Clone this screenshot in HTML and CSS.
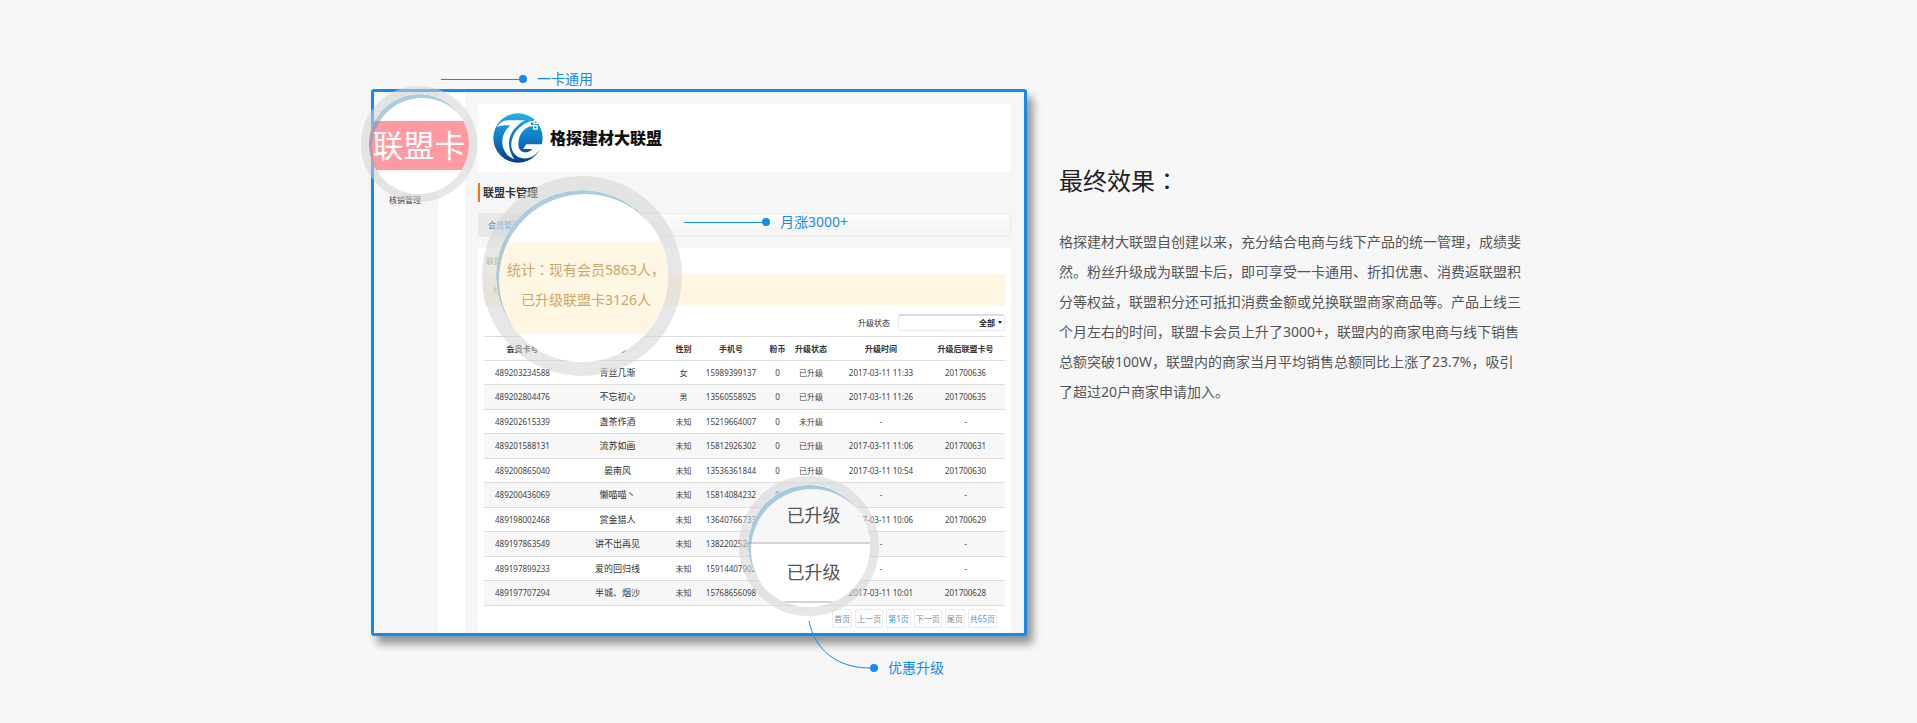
FILE: index.html
```html
<!DOCTYPE html>
<html lang="zh-CN">
<head>
<meta charset="utf-8">
<title>最终效果</title>
<link rel="stylesheet" href="styles.css">
</head>
<body>
<section class="showcase">
  <div class="figure">
    <div class="screen">
      <nav class="sidebar"><a href="#">核销管理</a></nav>
      <div class="subnav"></div>
      <div class="main">
        <header class="brand">
          <svg class="brand-logo" viewBox="0 0 150 150" aria-hidden="true">
            <defs>
              <linearGradient id="logo-fill" x1="0" y1="0" x2="0" y2="1">
                <stop offset="0" stop-color="#27b0e6"/>
                <stop offset="0.5" stop-color="#0e7cc6"/>
                <stop offset="1" stop-color="#043a92"/>
              </linearGradient>
            </defs>
            <circle cx="75" cy="75" r="74" fill="url(#logo-fill)"/>
            <path fill="#fff" d="M12 42Q24 22 44 22H96Q80 30 72 40C46 62 38 102 64 139C36 128 22 98 30 70Q36 50 52 38Q28 34 12 42Z"/>
            <path fill="#fff" d="M114 24C72 38 50 74 56 106C62 138 104 146 128 124Q142 112 150 94H100L90 108H118C104 124 76 122 76 94C76 66 92 46 112 40Z"/>
            <g fill="#0e86cc" stroke="#fff" stroke-width="4">
              <rect x="112" y="27" width="11" height="11"/>
              <rect x="124" y="23" width="8" height="8"/>
              <rect x="122" y="38" width="10" height="10"/>
            </g>
          </svg>
          <span class="brand-name">格探建材大联盟</span>
        </header>
        <h2 class="page-title">联盟卡管理</h2>
        <div class="tabs"><a class="tab" href="#">会员管理</a></div>
        <div class="panel">
          <div class="crumb">联盟卡会员</div>
          <div class="notice">统计：现有会员5863人，已升级联盟卡3126人、</div>
          <div class="filter">
            <label for="state">升级状态</label>
            <span class="select-wrap"><select id="state"><option>全部</option></select></span>
          </div>
          <table class="members">
            <colgroup><col class="c-card"><col class="c-name"><col class="c-sex"><col class="c-phone"><col class="c-coin"><col class="c-state"><col class="c-time"><col class="c-union"></colgroup>
            <thead><tr><th>会员卡号</th><th>昵称</th><th>性别</th><th>手机号</th><th>粉币</th><th>升级状态</th><th>升级时间</th><th>升级后联盟卡号</th></tr></thead>
            <tbody>
              <tr><td>489203234588</td><td>青丝几渐</td><td>女</td><td>15989399137</td><td>0</td><td>已升级</td><td>2017-03-11 11:33</td><td>201700636</td></tr>
              <tr><td>489202804476</td><td>不忘初心</td><td>男</td><td>13560558925</td><td>0</td><td>已升级</td><td>2017-03-11 11:26</td><td>201700635</td></tr>
              <tr><td>489202615339</td><td>盏茶作酒</td><td>未知</td><td>15219664007</td><td>0</td><td>未升级</td><td>-</td><td>-</td></tr>
              <tr><td>489201588131</td><td>流苏如画</td><td>未知</td><td>15812926302</td><td>0</td><td>已升级</td><td>2017-03-11 11:06</td><td>201700631</td></tr>
              <tr><td>489200865040</td><td>晏南风</td><td>未知</td><td>13536361844</td><td>0</td><td>已升级</td><td>2017-03-11 10:54</td><td>201700630</td></tr>
              <tr><td>489200436069</td><td>懒喵喵丶</td><td>未知</td><td>15814084232</td><td>0</td><td>未升级</td><td>-</td><td>-</td></tr>
              <tr><td>489198002468</td><td>赏金猎人</td><td>未知</td><td>13640766733</td><td>0</td><td>已升级</td><td>2017-03-11 10:06</td><td>201700629</td></tr>
              <tr><td>489197863549</td><td>讲不出再见</td><td>未知</td><td>13822025267</td><td>0</td><td>未升级</td><td>-</td><td>-</td></tr>
              <tr><td>489197899233</td><td>爱的回归线</td><td>未知</td><td>15914407902</td><td>0</td><td>未升级</td><td>-</td><td>-</td></tr>
              <tr><td>489197707294</td><td>半城、烟沙</td><td>未知</td><td>15768656098</td><td>0</td><td>已升级</td><td>2017-03-11 10:01</td><td>201700628</td></tr>
            </tbody>
          </table>
          <nav class="pager">
            <a href="#">首页</a><a href="#">上一页</a><a class="current" href="#">第1页</a><a href="#">下一页</a><a href="#">尾页</a><a class="current" href="#">共65页</a>
          </nav>
        </div>
      </div>
    </div>

    <div class="lens lens-card">
      <div class="lens-view"><span class="card-band">联盟卡</span></div>
    </div>
    <div class="lens lens-stats">
      <div class="lens-view"><p class="stats-band">统计<span class="colon" lang="zh-TW">：</span>现有会员5863人，<br>已升级联盟卡3126人</p></div>
    </div>
    <div class="lens lens-state">
      <div class="lens-view"><span class="state-row">已升级</span><span class="state-row">已升级</span></div>
    </div>

    <div class="callout callout-card"><span class="lead"></span>一卡通用</div>
    <div class="callout callout-growth"><span class="lead"></span>月涨3000+</div>
    <div class="callout callout-upgrade">
      <svg class="curve" viewBox="0 0 70 52" aria-hidden="true">
        <path d="M1 0C7 30 30 47 62 47" fill="none" stroke="#128bf1"/>
        <circle cx="66" cy="47" r="4" fill="#128bf1"/>
      </svg>
      优惠升级
    </div>
  </div>

  <article class="summary">
    <h1>最终效果<span class="colon" lang="zh-TW">：</span></h1>
    <p>格探建材大联盟自创建以来，充分结合电商与线下产品的统一管理，成绩斐然。粉丝升级成为联盟卡后，即可享受一卡通用、折扣优惠、消费返联盟积分等权益，联盟积分还可抵扣消费金额或兑换联盟商家商品等。产品上线三个月左右的时间，联盟卡会员上升了3000+，联盟内的商家电商与线下销售总额突破100W，联盟内的商家当月平均销售总额同比上涨了23.7%，吸引了超过20户商家申请加入。</p>
  </article>
</section>
</body>
</html>
```

FILE: styles.css
```css
* { box-sizing: border-box; }

body {
  margin: 0;
  background: #f7f7f7;
  color: #444;
  font-family: "Noto Sans", "Noto Sans CJK SC", sans-serif;
  font-size: 14px;
}

a { color: inherit; text-decoration: none; }

/* Colon centred in its cell */
.colon { font-family: "Noto Sans CJK TC", sans-serif; line-height: 1; }

.showcase {
  display: flex;
  align-items: flex-start;
  gap: 32px;
  max-width: 1175px;
  margin: 0 auto;
  padding: 89px 0 87px;
}

.figure { position: relative; flex: 0 0 656px; }

/* Framed admin screen */
.screen {
  display: flex;
  border: 3px solid #128bf1;
  border-radius: 3px;
  background: #f6f6f6;
  box-shadow: 6px 8px 8px rgba(0, 0, 0, 0.4);
  font-size: 8px;
  line-height: 12px;
}

.sidebar { flex: 0 0 64px; padding: 102px 0 0 15px; color: #333; }
.subnav { flex: 0 0 27px; background: #fff; }
.main { flex: 1; min-width: 0; padding: 12px 13px 0; }

.brand {
  display: flex;
  align-items: center;
  gap: 7px;
  height: 68px;
  padding-left: 15px;
  background: #fff;
}
.brand-logo { width: 50px; height: 50px; }
.brand-name { color: #111; font-size: 16px; line-height: 24px; font-weight: 900; }

.page-title {
  margin: 11px 0;
  padding-left: 3px;
  border-left: 2px solid #ff6c0a;
  color: #333;
  font-size: 11px;
  line-height: 19px;
  font-weight: 700;
}

.tabs {
  display: flex;
  height: 24px;
  border: 1px solid #ebebeb;
  border-radius: 2px;
  background: linear-gradient(#fcfcfe, #f4f4f4);
}
.tab { padding: 0 9px; background: #e8e8e8; color: #2196e8; line-height: 22px; }

.panel { margin-top: 11px; padding: 0 6px 5px; background: #fff; }
.crumb { padding-left: 2px; color: #7d9a6a; line-height: 26px; }
.notice {
  padding-left: 9px;
  border-radius: 2px;
  background: #fff6e4;
  color: #c9a06a;
  line-height: 32px;
}

.filter {
  display: flex;
  justify-content: flex-end;
  align-items: center;
  gap: 8px;
  margin: 8px 0 5px;
  color: #333;
}
.select-wrap { position: relative; width: 107px; height: 17px; }
.select-wrap::after {
  content: "";
  position: absolute;
  top: 7px;
  right: 3px;
  border: 2px solid transparent;
  border-top: 3px solid #222;
  border-bottom: 0;
}
.filter select {
  display: block;
  width: 100%;
  height: 17px;
  padding: 0 9px 0 0;
  border: 1px solid #e6ecf0;
  border-top: 2px solid #ddd;
  border-radius: 2px;
  background: #fff;
  color: #222;
  font: 700 8px/12px "Noto Sans", "Noto Sans CJK SC", sans-serif;
  text-align-last: right;
  appearance: none;
}

.members {
  width: 100%;
  table-layout: fixed;
  border-spacing: 0;
  border-top: 1px solid #ddd;
  color: #444;
  text-align: center;
  white-space: nowrap;
}
.c-card { width: 77px; }
.c-name { width: 113px; }
.c-sex { width: 19px; }
.c-phone { width: 76px; }
.c-coin { width: 17px; }
.c-state { width: 50px; }
.c-time { width: 90px; }
.members th,
.members td { height: 24px; padding: 0; border-bottom: 1px solid #ddd; }
.members th { color: #333; font-weight: 700; }
.members tbody tr:nth-child(even) td { height: 25px; }
.members tbody tr:nth-child(even) { background: #f7f7f7; }
.members td:nth-child(2) { color: #333; font-size: 9px; }

.pager {
  display: flex;
  justify-content: flex-end;
  gap: 3px;
  padding: 3px 8px 0 0;
  color: #888;
}
.pager a {
  padding: 0 1px;
  border: 1px solid #ececec;
  border-radius: 2px;
  line-height: 17px;
}
.pager .current { color: #2f9fe8; }

/* Magnifying lenses */
.lens {
  position: absolute;
  border-radius: 50%;
  border: 8px solid rgba(212, 212, 212, 0.55);
}
.lens-view {
  position: relative;
  display: flex;
  flex-direction: column;
  justify-content: center;
  height: 100%;
  overflow: hidden;
  border-radius: 50%;
  background: #fff;
  text-align: center;
  white-space: nowrap;
}
.lens-view::after {
  content: "";
  position: absolute;
  inset: 0;
  border-radius: 50%;
  box-shadow: inset 3px 4px 0 rgba(87, 158, 192, 0.5);
}

.lens-card { left: -10px; top: -3px; width: 116px; height: 116px; }
.card-band { margin-top: 2px; background: #ff9aa2; color: #fff; font-size: 31px; line-height: 49px; }

.lens-stats { left: 111px; top: 87px; width: 200px; height: 200px; border-width: 14px; }
.stats-band {
  margin: 24px 0 0;
  padding: 13px 0 19px 8px;
  background: #fff6e4;
  color: #cda66a;
  font-size: 14px;
  line-height: 30px;
}

.lens-state { left: 368px; top: 387px; width: 140px; height: 140px; border-width: 9px; }
.lens-state .lens-view { justify-content: flex-start; }
.state-row {
  padding-left: 9px;
  border-bottom: 2px solid #d4d4d4;
  color: #555;
  font-size: 18px;
  line-height: 57px;
}
.state-row:first-child { padding-top: 4px; background: #f7f7f7; line-height: 53px; }

/* Callouts */
.callout {
  position: absolute;
  display: flex;
  align-items: center;
  color: #128bf1;
  font-size: 14px;
  line-height: 20px;
  white-space: nowrap;
}
.lead {
  display: flex;
  align-items: center;
  width: 86px;
  margin-right: 10px;
}
.lead::before { content: ""; flex: 1; height: 1px; background: #128bf1; }
.lead::after { content: ""; width: 8px; height: 8px; border-radius: 50%; background: #128bf1; }
.callout-card { left: 70px; top: -20px; }
.callout-growth { left: 313px; top: 123px; }
.callout-upgrade { left: 437px; top: 532px; align-items: flex-end; gap: 10px; line-height: 10px; }
.curve { width: 70px; height: 52px; }

/* Summary text */
.summary { flex: 1; min-width: 0; max-width: 466px; padding-top: 77px; }
.summary h1 { margin: 0 0 31px; color: #222; font-size: 24px; line-height: 30px; font-weight: 400; }
.summary p { margin: 0; color: #555; line-height: 30px; }
```
